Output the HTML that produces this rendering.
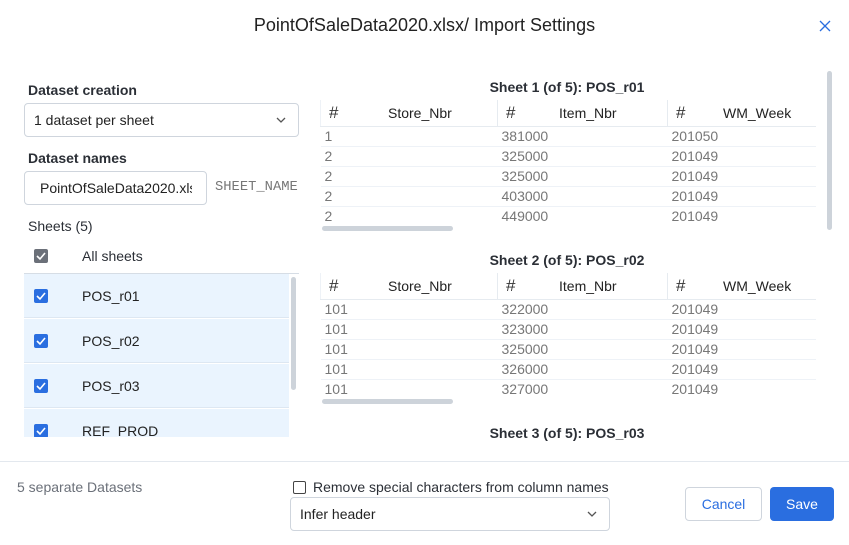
<!DOCTYPE html>
<html><head><meta charset="utf-8"><style>
*{box-sizing:border-box;margin:0;padding:0}
body{width:849px;height:545px;background:#fff;font-family:"Liberation Sans",Arial,sans-serif;color:#222;position:relative;overflow:hidden}
.a{position:absolute}
.lbl{font-size:14px;font-weight:bold;color:#2b2f36}
.box{border:1px solid #cfd5dd;border-radius:4px;background:#fff}
.cb{position:absolute;width:14px;height:14px;border-radius:2px;background:#2a6ee0}
.cb svg{position:absolute;left:2px;top:2px}
.row{position:absolute;left:24px;width:265px;height:44px;background:#eaf4fe;border-bottom:1px solid #dde7f2}
.row span{position:absolute;left:58px;top:14px;font-size:14px;color:#222}
.row .cb{left:10px;top:15px}
table{border-collapse:collapse;font-size:14px;position:absolute;left:320px}
td{height:20px;padding:0 4px;color:#777;border-top:1px solid #eef2f7;line-height:19px}
th{height:26px;font-weight:normal;color:#222;text-align:left;border-left:1px solid #e6ebf0;border-bottom:1px solid #e6ebf0;padding:0 4px;position:relative}
th:first-child{border-left:1px solid #eef2f7}
th b{font-weight:normal;font-size:17px;position:absolute;left:8px;top:3px;color:#333}
.hs{position:absolute;left:322px;width:131px;height:5px;border-radius:3px;background:#cdd3da}
.st{position:absolute;width:500px;left:317px;text-align:center;font-size:14px;font-weight:bold;color:#2b2f36}
</style></head><body>
<div class="a" style="left:0;top:15px;width:849px;text-align:center;font-size:18px;color:#222">PointOfSaleData2020.xlsx/ Import Settings</div>
<svg class="a" style="left:819px;top:20px" width="12" height="12"><path d="M1 1L11 11M11 1L1 11" stroke="#2a6ee0" stroke-width="1.3"/></svg>

<div class="a lbl" style="left:28px;top:82px">Dataset creation</div>
<div class="a box" style="left:24px;top:103px;width:275px;height:34px"><span class="a" style="left:9px;top:8px;font-size:14px">1 dataset per sheet</span>
<svg class="a" style="left:251px;top:13px" width="10" height="7"><path d="M1 1L5 5L9 1" stroke="#555" fill="none" stroke-width="1.3"/></svg></div>
<div class="a lbl" style="left:28px;top:150px">Dataset names</div>
<div class="a box" style="left:24px;top:171px;width:183px;height:34px"><div class="a" style="left:15px;top:8px;width:152px;overflow:hidden;font-size:14px;white-space:nowrap">PointOfSaleData2020.xlsx</div></div>
<div class="a" style="left:215px;top:180px;font-family:'Liberation Mono',monospace;font-size:13.8px;color:#777">SHEET_NAME</div>
<div class="a" style="left:28px;top:218px;font-size:14px;color:#2b2f36">Sheets (5)</div>
<div class="cb" style="left:34px;top:249px;background:#6b7079"><svg width="10" height="10"><path d="M1 5L4 8L9 2" stroke="#fff" fill="none" stroke-width="1.6"/></svg></div>
<div class="a" style="left:82px;top:248px;font-size:14px;color:#2b2f36">All sheets</div>
<div class="a" style="left:24px;top:273px;width:275px;height:1px;background:#d6dde5"></div>
<div style="position:absolute;left:0;top:274px;width:300px;height:163px;overflow:hidden">
<div class="row" style="top:0"><div class="cb"><svg width="10" height="10"><path d="M1 5L4 8L9 2" stroke="#fff" fill="none" stroke-width="1.6"/></svg></div><span>POS_r01</span></div>
<div class="row" style="top:45px"><div class="cb"><svg width="10" height="10"><path d="M1 5L4 8L9 2" stroke="#fff" fill="none" stroke-width="1.6"/></svg></div><span>POS_r02</span></div>
<div class="row" style="top:90px"><div class="cb"><svg width="10" height="10"><path d="M1 5L4 8L9 2" stroke="#fff" fill="none" stroke-width="1.6"/></svg></div><span>POS_r03</span></div>
<div class="row" style="top:135px"><div class="cb"><svg width="10" height="10"><path d="M1 5L4 8L9 2" stroke="#fff" fill="none" stroke-width="1.6"/></svg></div><span>REF_PROD</span></div>
<div class="a" style="left:291px;top:3px;width:5px;height:113px;border-radius:3px;background:#cdd3da"></div>
</div>

<div class="st" style="top:79px">Sheet 1 (of 5): POS_r01</div>
<table style="top:100px"><tr><th style="width:177px"><b>#</b><span style="margin-left:63px">Store_Nbr</span></th><th style="width:170px"><b>#</b><span style="margin-left:57px">Item_Nbr</span></th><th style="width:148px"><b>#</b><span style="margin-left:51px">WM_Week</span></th></tr>
<tr><td>1</td><td>381000</td><td>201050</td></tr><tr><td>2</td><td>325000</td><td>201049</td></tr><tr><td>2</td><td>325000</td><td>201049</td></tr><tr><td>2</td><td>403000</td><td>201049</td></tr><tr><td>2</td><td>449000</td><td>201049</td></tr></table>
<div class="hs" style="top:226px"></div>

<div class="st" style="top:252px">Sheet 2 (of 5): POS_r02</div>
<table style="top:273px"><tr><th style="width:177px"><b>#</b><span style="margin-left:63px">Store_Nbr</span></th><th style="width:170px"><b>#</b><span style="margin-left:57px">Item_Nbr</span></th><th style="width:148px"><b>#</b><span style="margin-left:51px">WM_Week</span></th></tr>
<tr><td>101</td><td>322000</td><td>201049</td></tr><tr><td>101</td><td>323000</td><td>201049</td></tr><tr><td>101</td><td>325000</td><td>201049</td></tr><tr><td>101</td><td>326000</td><td>201049</td></tr><tr><td>101</td><td>327000</td><td>201049</td></tr></table>
<div class="hs" style="top:399px"></div>
<div class="st" style="top:425px">Sheet 3 (of 5): POS_r03</div>
<div class="a" style="left:827px;top:71px;width:5px;height:159px;border-radius:3px;background:#cdd3da"></div>

<div class="a" style="left:0;top:461px;width:849px;height:1px;background:#e3e8ee"></div>
<div class="a" style="left:17px;top:479px;font-size:14px;color:#6b7079">5 separate Datasets</div>
<div class="a" style="left:293px;top:481px;width:13px;height:13px;border:1.5px solid #444;border-radius:2px"></div>
<div class="a" style="left:313px;top:479px;font-size:14px;color:#2b2f36">Remove special characters from column names</div>
<div class="a box" style="left:290px;top:497px;width:320px;height:34px"><span class="a" style="left:9px;top:8px;font-size:14px">Infer header</span>
<svg class="a" style="left:296px;top:13px" width="10" height="7"><path d="M1 1L5 5L9 1" stroke="#555" fill="none" stroke-width="1.3"/></svg></div>
<div class="a box" style="left:685px;top:487px;width:77px;height:34px;text-align:center;line-height:32px;color:#2a6ee0;font-size:14px">Cancel</div>
<div class="a" style="left:770px;top:487px;width:64px;height:34px;border-radius:4px;background:#2a6ee0;text-align:center;line-height:34px;color:#fff;font-size:14px">Save</div>
</body></html>
